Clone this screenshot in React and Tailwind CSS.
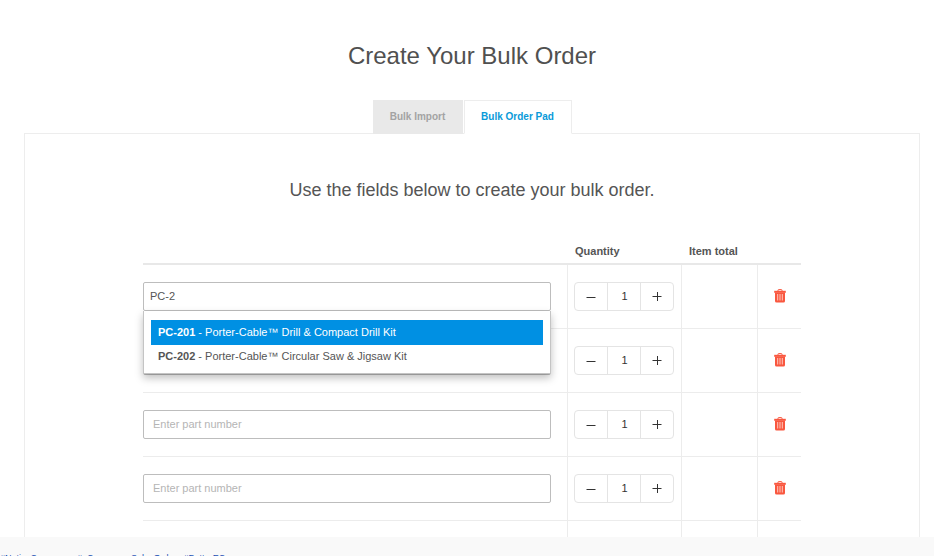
import { useState } from 'react';
import clsx from 'clsx';

const PARTS = [
  { id: 'PC-201', name: 'Porter-Cable™ Drill & Compact Drill Kit' },
  { id: 'PC-202', name: 'Porter-Cable™ Circular Saw & Jigsaw Kit' },
];

const INITIAL_ROWS = [
  { id: 1, part: 'PC-2', qty: 1 },
  { id: 2, part: '', qty: 1 },
  { id: 3, part: '', qty: 1 },
  { id: 4, part: '', qty: 1 },
  { id: 5, part: '', qty: 1 },
];

function TrashIcon() {
  return (
    <svg width="12" height="14" viewBox="0 0 12 14" fill="none" aria-hidden="true">
      <path d="M4 2V1.2Q4 .6 4.6 .6h2.8Q8 .6 8 1.2V2" stroke="#f9573f" strokeWidth="1" />
      <path d="M.2 1.8h11.6v2H.2z" fill="#f9573f" />
      <path d="M1 3.5h10v8.5q0 1.5-1.5 1.5h-7Q1 13.500 1 12z" fill="#f9573f" />
      <path d="M3.7 5v6.500M6 5v6.500M8.300 5v6.500" stroke="#ffd5cc" strokeWidth=".9" />
    </svg>
  );
}

function Stepper({ value, label, onChange }) {
  return (
    <div className="flex h-[29px] w-[100px] rounded border border-[#e4e4e4] text-[#333]">
      <button
        type="button"
        aria-label="Decrease quantity"
        className="flex w-8 items-center justify-center"
        onClick={() => onChange(Math.max(1, value - 1))}
      >
        <svg width="10" height="11" viewBox="0 0 10 11" stroke="currentColor" aria-hidden="true">
          <path d="M.5 6.500h9" />
        </svg>
      </button>
      <input
        className="min-w-0 flex-1 border-x border-[#e4e4e4] pl-0.5 text-center outline-none"
        aria-label={label}
        value={value}
        onChange={(e) => onChange(Number(e.target.value) || 1)}
      />
      <button
        type="button"
        aria-label="Increase quantity"
        className="flex w-8 items-center justify-center"
        onClick={() => onChange(value + 1)}
      >
        <svg width="10" height="11" viewBox="0 0 10 11" stroke="currentColor" aria-hidden="true">
          <path d="M.5 5.500h9M5.500 1v9" />
        </svg>
      </button>
    </div>
  );
}

function Suggestions({ items, onPick }) {
  return (
    <ul
      role="listbox"
      aria-label="Matching parts"
      className="absolute top-full right-0 left-0 z-10 border border-t-0 border-[#c4c4c4] bg-white px-[7px] pt-[9px] pb-1.5 shadow-[0_4px_8px_rgba(0,0,0,0.25)]"
    >
      {items.map((item, i) => (
        <li key={item.id} role="option" aria-selected={i === 0}>
          <button
            type="button"
            onClick={() => onPick(item.id)}
            className={clsx(
              'block w-full px-[7px] text-left whitespace-nowrap',
              i === 0 ? 'h-[25px] bg-[#0090e3] text-white' : 'h-[22px] text-[#555]'
            )}
          >
            <b>{item.id}</b> - {item.name}
          </button>
        </li>
      ))}
    </ul>
  );
}

export default function App() {
  const [rows, setRows] = useState(INITIAL_ROWS);
  const [tab, setTab] = useState('pad');
  const [openRow, setOpenRow] = useState(1);

  const update = (id, patch) => {
    setRows((prev) => prev.map((r) => (r.id === id ? { ...r, ...patch } : r)));
  };

  const tabClass = (name) =>
    clsx(
      'h-[34px] border pb-0.5 text-center text-[10px] font-bold',
      tab === name
        ? 'border-[#ededed] border-b-white bg-white text-[#0a9ad9]'
        : 'border-[#e9e9e9] bg-[#e9e9e9] text-[#a3a3a3]'
    );

  return (
    <div className="flex h-screen flex-col bg-[#f9f9f9] font-['Liberation_Sans',Arial,sans-serif] text-[11px] text-[#555]">
      <main className="min-h-0 flex-1 overflow-hidden bg-white pt-10 pr-3.5 pl-6">
        <h1 className="text-center text-2xl leading-8 text-[#505050]">Create Your Bulk Order</h1>

        {/* Tabs */}
        <div className="mt-7 flex justify-center gap-px" role="tablist">
          <button type="button" role="tab" aria-selected={tab === 'import'} className={clsx(tabClass('import'), 'w-[90px]')} onClick={() => setTab('import')}>
            Bulk Import
          </button>
          <button type="button" role="tab" aria-selected={tab === 'pad'} className={clsx(tabClass('pad'), 'relative w-[108px]')} onClick={() => setTab('pad')}>
            Bulk Order Pad
          </button>
        </div>

        <section className="-mt-px border border-[#ededed] px-[118px] pt-11">
          <p className="text-center text-lg leading-6">Use the fields below to create your bulk order.</p>

          <table className="mt-9 w-full table-fixed border-collapse">
            <thead>
              <tr className="h-[26px] border-b-2 border-[#e8e8e8] text-left align-bottom leading-4">
                <th aria-label="Part number" />
                <th className="w-[114px] pb-1 pl-2">Quantity</th>
                <th className="w-[76px] pb-1 pl-2">Item total</th>
                <th className="w-11" aria-label="Remove" />
              </tr>
            </thead>
            <tbody>
              {rows.map((row) => (
                <tr key={row.id} className="h-16 border-b border-[#ececec]">
                  <td className="border-r border-[#ececec] pr-4">
                    <div className="relative">
                      <input
                        className={clsx(
                          'block h-[29px] w-full rounded-xs border border-[#bdbdbd] outline-none placeholder:text-[#b5b5b5]',
                          row.part ? 'px-1.5' : 'px-[9px]'
                        )}
                        aria-label={`Part number, row ${row.id}`}
                        placeholder="Enter part number"
                        value={row.part}
                        onChange={(e) => {
                          update(row.id, { part: e.target.value });
                          setOpenRow(e.target.value ? row.id : null);
                        }}
                      />
                      {openRow === row.id && (
                        <Suggestions
                          items={PARTS}
                          onPick={(part) => {
                            update(row.id, { part });
                            setOpenRow(null);
                          }}
                        />
                      )}
                    </div>
                  </td>
                  <td className="border-r border-[#ececec] pl-1.5">
                    <Stepper value={row.qty} label={`Quantity, row ${row.id}`} onChange={(qty) => update(row.id, { qty })} />
                  </td>
                  <td className="border-r border-[#ececec]" />
                  <td className="pl-4">
                    <button
                      type="button"
                      aria-label="Remove row"
                      className="block"
                      onClick={() => setRows((prev) => prev.filter((r) => r.id !== row.id))}
                    >
                      <TrashIcon />
                    </button>
                  </td>
                </tr>
              ))}
            </tbody>
          </table>
        </section>
      </main>

      <footer className="h-[19px] shrink-0 overflow-hidden pt-3 text-[9px] leading-[18px] text-[#1a4fb4]">
        <a href="#native">#NativeCommerce</a> <a href="#sales">#eCommerceSalesOrders</a> <a href="#better">#BetterECommerce</a>
      </footer>
    </div>
  );
}
